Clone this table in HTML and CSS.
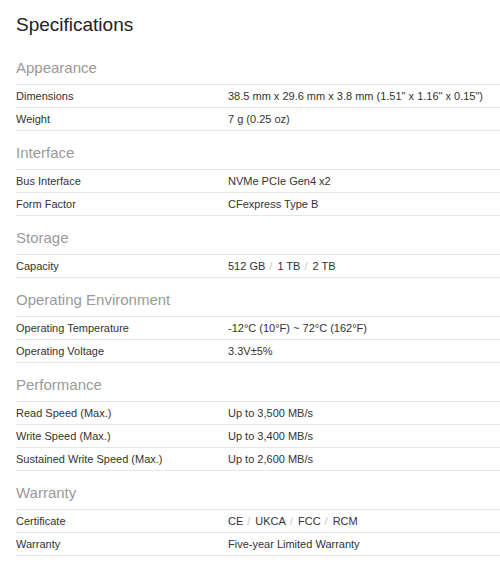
FILE: index.html
```html
<!DOCTYPE html>
<html>
<head>
<meta charset="utf-8">
<link rel="stylesheet" href="styles.css">
</head>
<body>
<div class="page">
  <h1 class="title">Specifications</h1>

  <section class="group">
    <h2 class="group-title">Appearance</h2>
    <div class="table">
      <div class="row"><div class="label">Dimensions</div><div class="value">38.5 mm x 29.6 mm x 3.8 mm (1.51" x 1.16" x 0.15")</div></div>
      <div class="row"><div class="label">Weight</div><div class="value">7 g (0.25 oz)</div></div>
    </div>
  </section>

  <section class="group">
    <h2 class="group-title">Interface</h2>
    <div class="table">
      <div class="row"><div class="label">Bus Interface</div><div class="value">NVMe PCIe Gen4 x2</div></div>
      <div class="row"><div class="label">Form Factor</div><div class="value">CFexpress Type B</div></div>
    </div>
  </section>

  <section class="group">
    <h2 class="group-title">Storage</h2>
    <div class="table">
      <div class="row"><div class="label">Capacity</div><div class="value">512 GB<span class="sep">/</span>1 TB<span class="sep">/</span>2 TB</div></div>
    </div>
  </section>

  <section class="group">
    <h2 class="group-title">Operating Environment</h2>
    <div class="table">
      <div class="row"><div class="label">Operating Temperature</div><div class="value">-12°C (10°F) ~ 72°C (162°F)</div></div>
      <div class="row"><div class="label">Operating Voltage</div><div class="value">3.3V±5%</div></div>
    </div>
  </section>

  <section class="group">
    <h2 class="group-title">Performance</h2>
    <div class="table">
      <div class="row"><div class="label">Read Speed (Max.)</div><div class="value">Up to 3,500 MB/s</div></div>
      <div class="row"><div class="label">Write Speed (Max.)</div><div class="value">Up to 3,400 MB/s</div></div>
      <div class="row"><div class="label">Sustained Write Speed (Max.)</div><div class="value">Up to 2,600 MB/s</div></div>
    </div>
  </section>

  <section class="group">
    <h2 class="group-title">Warranty</h2>
    <div class="table">
      <div class="row"><div class="label">Certificate</div><div class="value">CE<span class="sep">/</span>UKCA<span class="sep">/</span>FCC<span class="sep">/</span>RCM</div></div>
      <div class="row"><div class="label">Warranty</div><div class="value">Five-year Limited Warranty</div></div>
    </div>
  </section>
</div>
</body>
</html>
```

FILE: styles.css
```css
* { box-sizing: border-box; }
html, body { margin: 0; padding: 0; background: #fff; }
body {
  font-family: "Liberation Sans", Arial, Helvetica, sans-serif;
  color: #333;
}
.page {
  padding: 14px 0 0 16px;
}
.title {
  margin: 0;
  font-size: 19px;
  line-height: 22px;
  font-weight: normal;
  color: #222;
  padding-bottom: 10px;
}
.group-title {
  margin: 0;
  font-size: 15px;
  line-height: 18px;
  font-weight: normal;
  color: #9a9a9a;
  padding: 13px 0 7px;
}
.table {
  border-bottom: 1px solid #e6e6e6;
}
.row {
  display: grid;
  grid-template-columns: 212px 1fr;
  border-top: 1px solid #e6e6e6;
  height: 23px;
  padding-bottom: 1px;
  align-items: center;
  font-size: 11px;
  line-height: 14px;
  color: #333;
}
.value { white-space: nowrap; }
.sep {
  color: #c8c8c8;
  margin: 0 5px 0 4px;
}
```
